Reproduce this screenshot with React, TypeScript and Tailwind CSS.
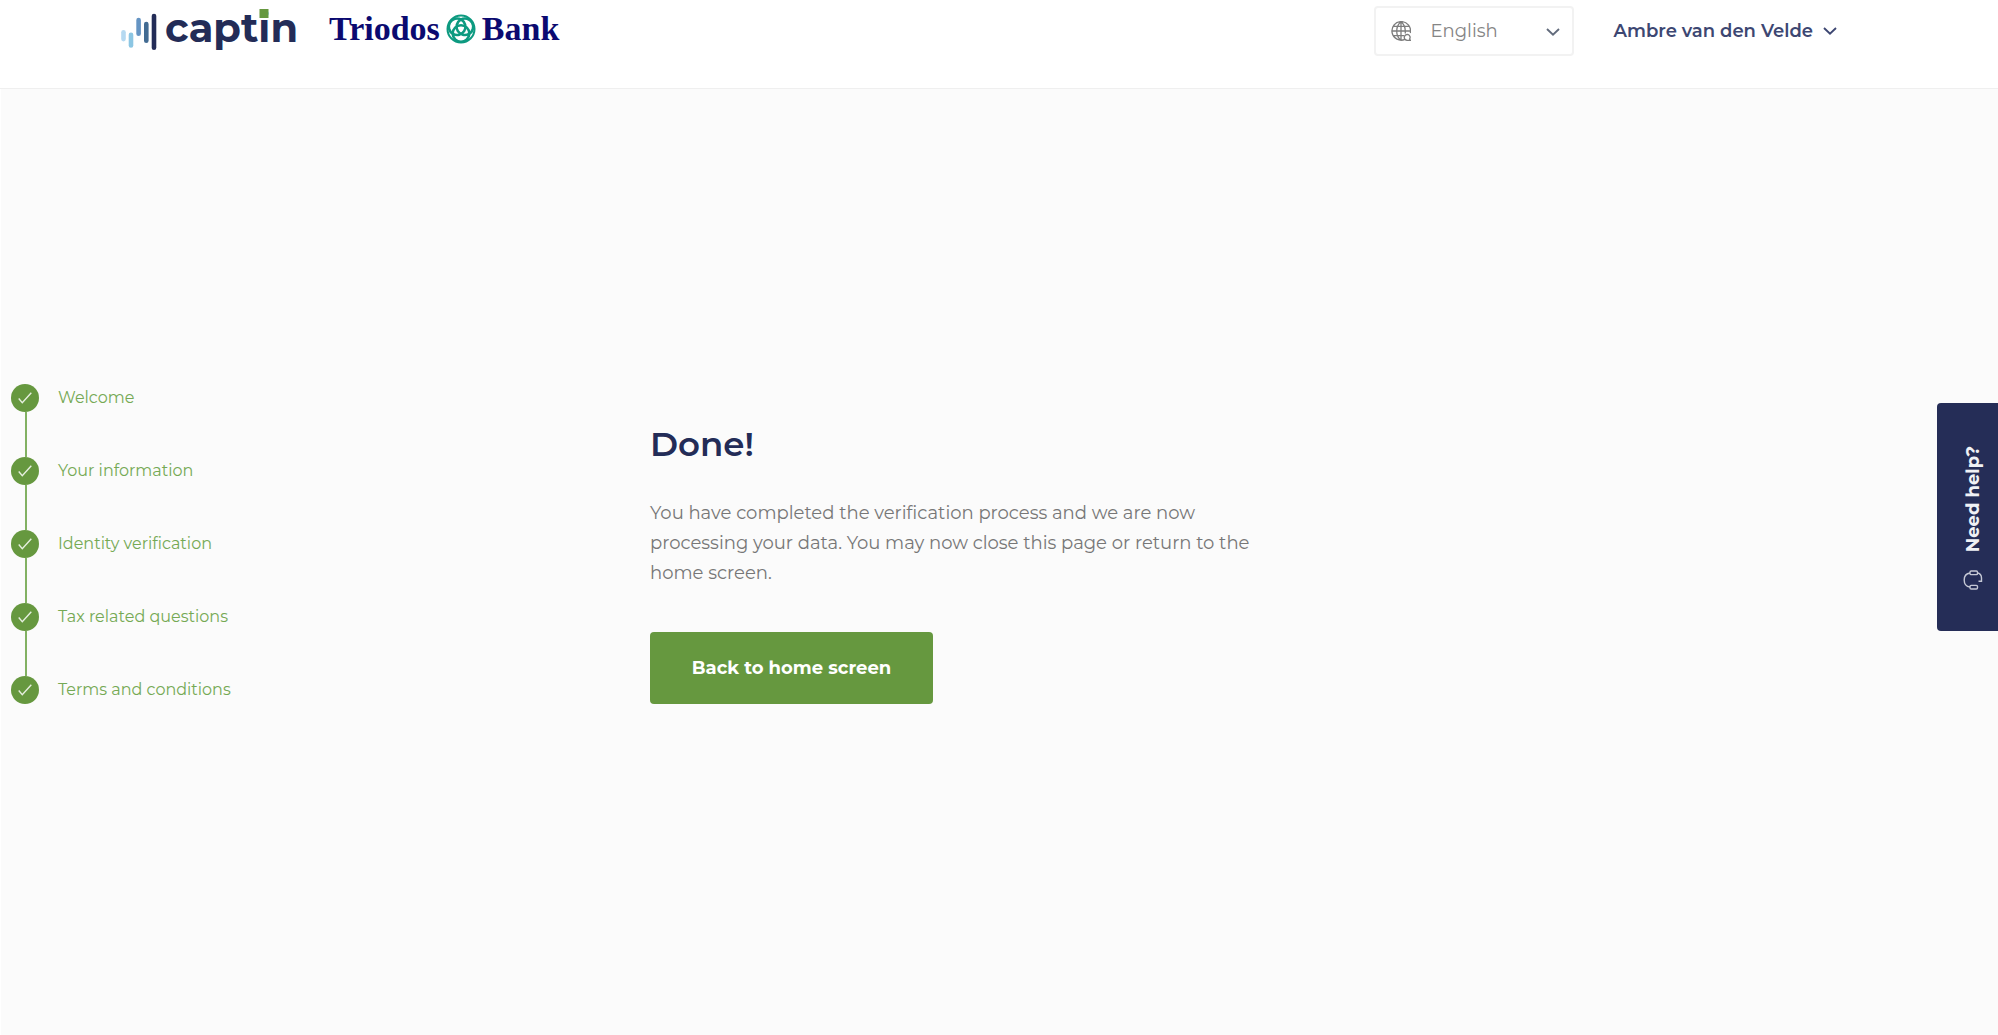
import React from "react";

const steps = [
  "Welcome",
  "Your information",
  "Identity verification",
  "Tax related questions",
  "Terms and conditions",
];

function CaptinLogo() {
  return (
    <a href="#home" className="flex h-[62px] w-[179px] items-start text-[#232c57]">
      <svg width="36" height="62" viewBox="0 0 36 62" className="shrink-0" strokeLinecap="round" strokeWidth="4.6" aria-hidden="true">
        <path d="M2.5 32.3v6.8" stroke="#b5d9f1" />
        <path d="M10 34.8v10.6" stroke="#8cc6e3" />
        <path d="M17.6 20v13.8" stroke="#6594c3" />
        <path d="M25.3 24v16.8" stroke="#426b92" />
        <path d="M33 16v31.8" stroke="#232c57" />
      </svg>
      <span className="ml-2 text-[40px] leading-14 font-bold">
        capt
        <span className="relative">
          i
          <span className="absolute top-[6px] left-1/2 size-[9px] -translate-x-1/2 bg-[#66983f]" />
        </span>
        n
      </span>
    </a>
  );
}

function TriodosLogo() {
  return (
    <a href="#triodos" className="ml-[29px] flex h-[58px] items-center font-['Liberation_Serif',serif] text-[34px] leading-[58px] font-bold text-[#0b0a70]">
      <span>Triodos</span>
      <svg width="30" height="30" viewBox="0 0 30 30" className="mx-1.5" fill="none" stroke="#0d9a80" aria-hidden="true">
        <circle cx="15" cy="15" r="13.5" strokeWidth="2" />
        {[0, 120, 240].map((angle) => (
          <circle key={angle} cx="15" cy="19.5" r="8.3" strokeWidth="2.600" transform={`rotate(${angle} 15 15)`} />
        ))}
      </svg>
      <span>Bank</span>
    </a>
  );
}

function Chevron() {
  return (
    <svg width="14" height="8" viewBox="0 0 14 8" fill="none" stroke="currentColor" strokeWidth="1.9" aria-hidden="true">
      <path d="M1 1l6 5.600L13 1" />
    </svg>
  );
}

function Globe() {
  return (
    <svg width="20" height="20" viewBox="0 0 20 20" fill="none" stroke="currentColor" strokeWidth="1.300" aria-hidden="true">
      <path d="M14 18.400A9.300 9.300 0 1 1 19.300 12M10 .7C7 3.100 5.700 6.300 5.700 10s1.300 6.900 4.300 9.300M10 .7c3 2.400 4.300 5.600 4.300 9.300v2.500M10 .7v18.600M.7 10h18.600M2.200 5.300h15.600M2.200 14.700H13" />
      <path d="M19.500 19.300h-3.300a2.900 2.900 0 1 1 2.400-1.300z" />
    </svg>
  );
}

function Header() {
  return (
    <header className="flex min-h-[89px] items-start border-b border-[#efefef] bg-white pr-[161px] pl-[121px]">
      <CaptinLogo />
      <TriodosLogo />
      <div className="relative mt-1.5 ml-auto text-[#7d7d7d]">
        <span className="pointer-events-none absolute top-[15px] left-[17px]"><Globe /></span>
        <select aria-label="Language" className="h-[50px] w-[200px] appearance-none rounded border-2 border-[#f2f2f2] bg-white pl-[55px] text-[18px] text-[#858585]">
          <option>English</option>
        </select>
        <span className="pointer-events-none absolute top-[22px] right-3.5 text-[#626b7c]"><Chevron /></span>
      </div>
      <button className="mt-1.5 ml-10 flex h-[50px] items-center gap-2.5 text-[18px] font-semibold whitespace-nowrap text-[#3d4772]">
        Ambre van den Velde <Chevron />
      </button>
    </header>
  );
}

function Steps() {
  return (
    <ol className="w-[649px] shrink-0 pl-2.5">
      {steps.map((label, i) => (
        <li key={label}>
          <div className="flex items-center gap-[19px] text-[16px] leading-7 text-[#75a954]">
            <span className="flex size-7 items-center justify-center rounded-full bg-[#66983f]">
              <svg width="14" height="12" viewBox="0 0 14 12" fill="none" stroke="#e6efdf" strokeWidth="1.400" aria-hidden="true">
                <path d="M.7 6.500l3.600 4.300L13.300.7" />
              </svg>
            </span>
            {label}
          </div>
          {i < steps.length - 1 && <div className="ml-3.5 h-[45px] w-0.5 bg-[#82b163]" />}
        </li>
      ))}
    </ol>
  );
}

function HelpTab() {
  return (
    <button className="fixed top-[403px] right-0 flex h-[228px] w-[61px] flex-col items-center justify-center gap-[18px] rounded-l bg-[#252d57] pt-0.5 pl-2.5 text-[#f0f1f5]">
      <span className="rotate-180 text-[18px] leading-6 font-bold [writing-mode:vertical-rl]">Need help?</span>
      <svg width="20" height="20" viewBox="0 0 20 20" fill="none" stroke="#c5c8d5" strokeWidth="1.400" aria-hidden="true">
        <path d="M7 3C3 3.500 1.200 6.500 1.200 10S3 16.500 7 17M14 2.800c3.200.7 4.500 2.700 4.500 5.200v3.300h-3" />
        <rect x="7" y="1" width="7.500" height="3.600" rx="1.200" />
        <rect x="7" y="15.400" width="7.500" height="3.600" rx="1.200" />
      </svg>
    </button>
  );
}

export default function App() {
  return (
    <div className="flex min-h-screen flex-col bg-[#fbfbfb] font-['Montserrat','Inter',sans-serif]">
      <Header />
      <main className="flex grow border-l border-white pt-[295px]">
        <Steps />
        <section className="mt-10 w-full max-w-[625px]">
          <h1 className="text-[34px] leading-10 font-semibold text-[#232c57]">Done!</h1>
          <p className="mt-[34px] text-[18px] leading-[30px] text-[#777]">
            You have completed the verification process and we are now processing your data. You may now close this page or return to the home screen.
          </p>
          <button className="mt-11 h-[72px] w-[283px] rounded bg-[#66983f] text-[18px] font-bold text-white">Back to home screen</button>
        </section>
      </main>
      <HelpTab />
    </div>
  );
}
